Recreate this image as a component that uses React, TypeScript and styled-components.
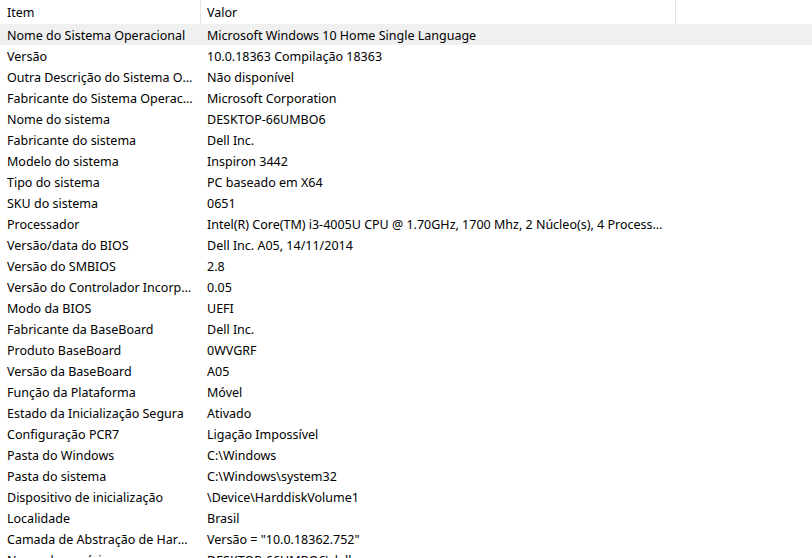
import React from "react";
import styled, { createGlobalStyle } from "styled-components";

const Global = createGlobalStyle`
  html, body { margin: 0; padding: 0; background: #ffffff; overflow: hidden; }
  body { font-family: "Noto Sans", "Open Sans", sans-serif; font-size: 12.5px; color: #000; }
`;

const Table = styled.div`
  width: 812px;
  height: 558px;
  overflow: hidden;
  display: flex;
  flex-direction: column;
`;

const COLS = "201px 475px";

const Header = styled.div`
  display: grid;
  grid-template-columns: ${COLS};
  height: 24px;
  flex: none;
`;

const HeaderCell = styled.div<{ $value?: boolean }>`
  display: flex;
  align-items: center;
  padding: 1px 6px 0 ${(p) => (p.$value ? "6px" : "7px")};
  border-right: 1px solid #e5e5e5;
  box-sizing: border-box;
  line-height: 23px;
`;

const Row = styled.div<{ $selected?: boolean }>`
  display: grid;
  grid-template-columns: ${COLS};
  height: 21px;
  flex: none;
  background: ${(p) => (p.$selected ? "#f0f0f0" : "transparent")};
`;

const Cell = styled.div<{ $value?: boolean }>`
  padding: 2px 7px 0 ${(p) => (p.$value ? "6px" : "7px")};
  line-height: 19px;
  white-space: nowrap;
  overflow: hidden;
  text-overflow: ellipsis;
  box-sizing: border-box;
`;

const rows: [string, string][] = [
  ["Nome do Sistema Operacional", "Microsoft Windows 10 Home Single Language"],
  ["Versão", "10.0.18363 Compilação 18363"],
  ["Outra Descrição do Sistema Operacional", "Não disponível"],
  ["Fabricante do Sistema Operacional", "Microsoft Corporation"],
  ["Nome do sistema", "DESKTOP-66UMBO6"],
  ["Fabricante do sistema", "Dell Inc."],
  ["Modelo do sistema", "Inspiron 3442"],
  ["Tipo do sistema", "PC baseado em X64"],
  ["SKU do sistema", "0651"],
  ["Processador", "Intel(R) Core(TM) i3-4005U CPU @ 1.70GHz, 1700 Mhz, 2 Núcleo(s), 4 Processador(es) Lógico(s)"],
  ["Versão/data do BIOS", "Dell Inc. A05, 14/11/2014"],
  ["Versão do SMBIOS", "2.8"],
  ["Versão do Controlador Incorporado", "0.05"],
  ["Modo da BIOS", "UEFI"],
  ["Fabricante da BaseBoard", "Dell Inc."],
  ["Produto BaseBoard", "0WVGRF"],
  ["Versão da BaseBoard", "A05"],
  ["Função da Plataforma", "Móvel"],
  ["Estado da Inicialização Segura", "Ativado"],
  ["Configuração PCR7", "Ligação Impossível"],
  ["Pasta do Windows", "C:\\Windows"],
  ["Pasta do sistema", "C:\\Windows\\system32"],
  ["Dispositivo de inicialização", "\\Device\\HarddiskVolume1"],
  ["Localidade", "Brasil"],
  ["Camada de Abstração de Hardware", 'Versão = "10.0.18362.752"'],
  ["Nome do usuário", "DESKTOP-66UMBO6\\dell"],
];

export default function App() {
  return (
    <>
      <Global />
      <Table>
        <Header>
          <HeaderCell>Item</HeaderCell>
          <HeaderCell $value>Valor</HeaderCell>
        </Header>
        {rows.map(([k, v], i) => (
          <Row key={k} $selected={i === 0}>
            <Cell>{k}</Cell>
            <Cell $value>{v}</Cell>
          </Row>
        ))}
      </Table>
    </>
  );
}
